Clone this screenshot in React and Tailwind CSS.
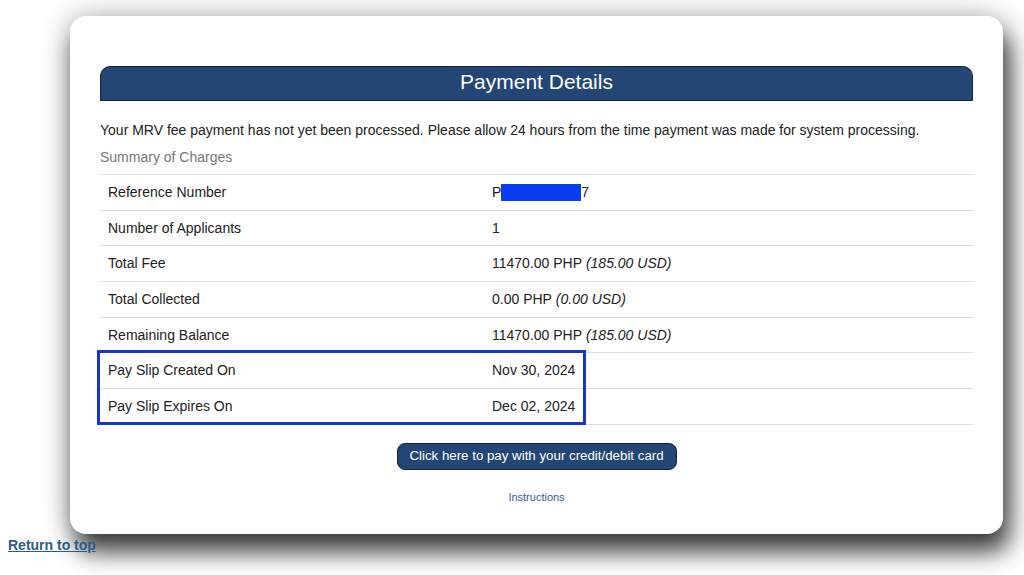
const rows = [
  { label: 'Reference Number', ref: true },
  { label: 'Number of Applicants', value: '1' },
  { label: 'Total Fee', value: '11470.00 PHP', usd: '(185.00 USD)' },
  { label: 'Total Collected', value: '0.00 PHP', usd: '(0.00 USD)' },
  { label: 'Remaining Balance', value: '11470.00 PHP', usd: '(185.00 USD)' },
  { label: 'Pay Slip Created On', value: 'Nov 30, 2024' },
  { label: 'Pay Slip Expires On', value: 'Dec 02, 2024' },
];

export default function App() {
  return (
    <div className="w-[1024px] h-[575px] bg-white overflow-hidden font-['Liberation_Sans',Arial,sans-serif] text-[#222]">
      <div className="pt-[16px] pl-[70px]">
        <div className="w-[933px] h-[518px] bg-white rounded-[16px] shadow-[0_0_30px_rgba(0,0,0,0.3),6px_18px_24px_rgba(0,0,0,0.72)] px-[30px] pt-[50px]">
          {/* Header */}
          <div className="h-[35px] bg-[#244674] border border-[#14243c] rounded-t-[10px] flex items-center justify-center pb-[5px]">
            <h1 className="text-white text-[21px] leading-none">Payment Details</h1>
          </div>

          <p className="mt-[20px] text-[14px] leading-[18px] text-[#222]">
            Your MRV fee payment has not yet been processed. Please allow 24 hours from the time payment was made for system processing.
          </p>
          <p className="mt-[9px] text-[14px] leading-[18px] text-[#777]">Summary of Charges</p>

          {/* Table */}
          <div className="relative mt-[8px] border-b border-[#ddd]">
            {rows.map((r) => (
              <div key={r.label} className="grid grid-cols-[384px_1fr] h-[35.7px] items-center border-t border-[#ddd] text-[14px]">
                <span className="pl-[8px]">{r.label}</span>
                <span className="pl-[8px]">
                  {r.ref ? (
                    <span className="inline-flex items-center">
                      P<span className="inline-block w-[80px] h-[17px] bg-[#0a3cf2]" />7
                    </span>
                  ) : (
                    <>
                      {r.value}
                      {r.usd && <i> {r.usd}</i>}
                    </>
                  )}
                </span>
              </div>
            ))}
            {/* Highlight box */}
            <div className="absolute left-[-3px] top-[176px] w-[489px] h-[75px] border-[3px] border-[#1538c9] pointer-events-none" />
          </div>

          {/* Button */}
          <div className="flex justify-center mt-[18px]">
            <button className="w-[280px] h-[27px] rounded-[8px] bg-[#244674] border border-[#14243c] text-white text-[13.3px]">
              Click here to pay with your credit/debit card
            </button>
          </div>
          <div className="text-center mt-[14px]">
            <a className="text-[11px] text-[#35618f]">Instructions</a>
          </div>
        </div>
      </div>
      <div className="pl-[8px] pt-0 -mt-[1px]">
        <a className="text-[14px] font-bold underline text-[#2d5b86]">Return to top</a>
      </div>
    </div>
  );
}
